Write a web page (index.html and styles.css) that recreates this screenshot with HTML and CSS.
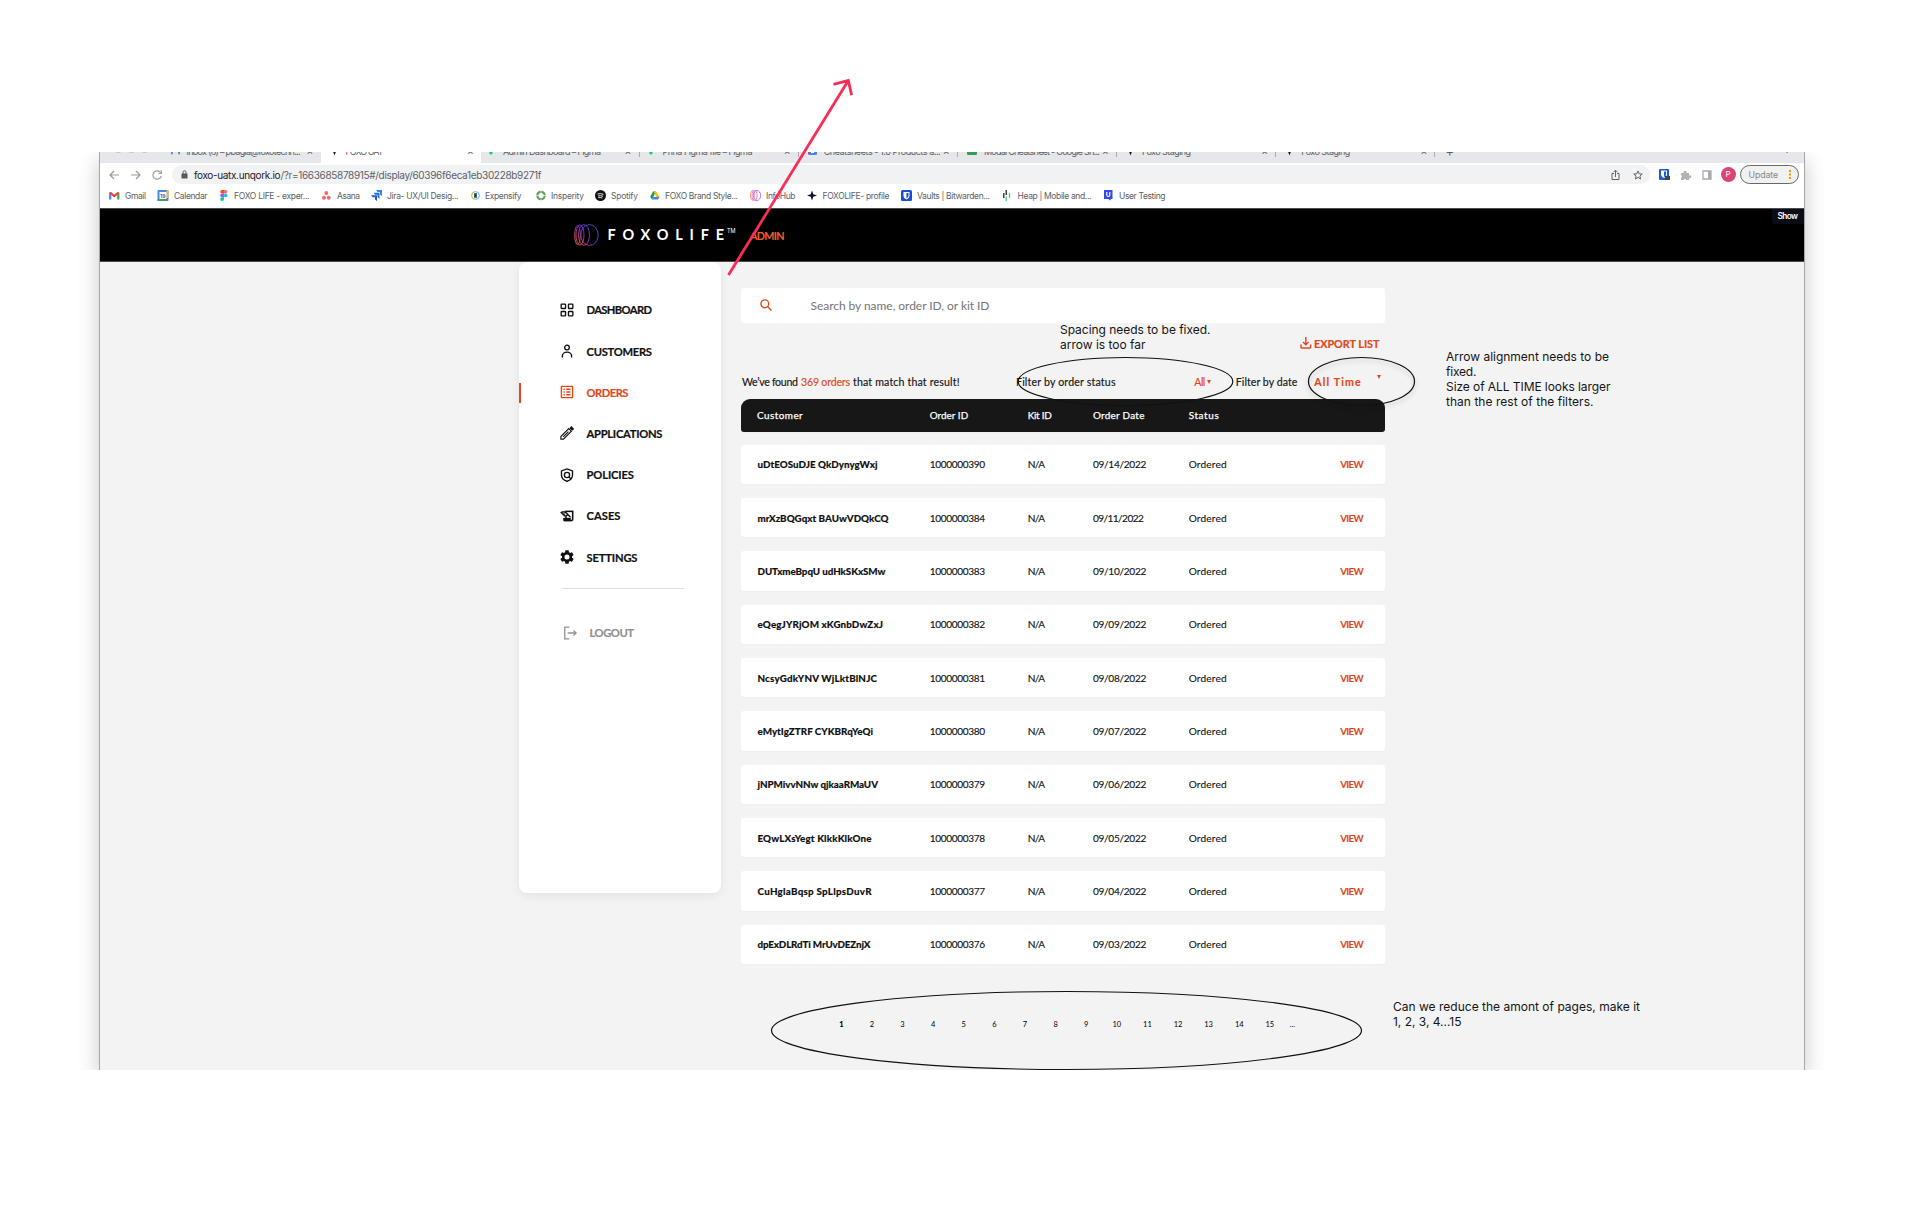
FILE: index.html
```html
<!DOCTYPE html>
<html lang="en">
<head>
<meta charset="utf-8">
<title>FOXO UAT</title>
<link rel="stylesheet" href="styles.css">
</head>
<body>
<main class="board">
<section class="window">
  <div class="tabs">
    <div class="tab lead"><i class="light"></i><i class="light"></i><i class="light"></i>
      <svg class="fav mail" width="9" height="9" viewBox="0 0 11 9"><path d="M1 9V1" stroke="#4285f4" stroke-width="2.4"/><path d="M10 9V1" stroke="#34a853" stroke-width="2.4"/><path d="M1 1l4.500 4L10 1" fill="none" stroke="#ea4335" stroke-width="2.400"/></svg>
      <span class="title" data-w="114">Inbox (6) – pbagla@foxotechn...</span><b>×</b></div>
    <div class="tab active"><svg class="fav" width="9" height="10" viewBox="0 0 10 10"><path d="M5 0l1.300 3.700L10 5 6.300 6.300 5 10 3.700 6.300 0 5l3.700-1.300z" fill="#0b1533"/></svg><span class="title" data-w="38">FOXO UAT</span><b>×</b></div>
    <div class="tab t3"><svg class="fav" width="7" height="9" viewBox="0 0 8 12"><path d="M0 8a2 2 0 1 0 4 2V6H2a2 2 0 0 0-2 2" fill="#0acf83"/><circle cx="6" cy="6" r="2" fill="#1abcfe"/><path d="M2 4h2v4H2a2 2 0 0 1 0-4" fill="#a259ff"/></svg><span class="title" data-w="98">Admin Dashboard – Figma</span><b>×</b></div>
    <div class="tab"><svg class="fav" width="7" height="9" viewBox="0 0 8 12"><path d="M0 8a2 2 0 1 0 4 2V6H2a2 2 0 0 0-2 2" fill="#0acf83"/><circle cx="6" cy="6" r="2" fill="#1abcfe"/><path d="M2 4h2v4H2a2 2 0 0 1 0-4" fill="#a259ff"/></svg><span class="title" data-w="90">Prina Figma file – Figma</span><b>×</b></div>
    <div class="tab"><svg class="fav" width="9" height="9" viewBox="0 0 9 9"><rect width="9" height="9" rx="1.500" fill="#4285f4"/><path d="M0 3h3v3L0 8z" fill="#ea4335"/><path d="M3 5h3v2H3z" fill="#fff"/></svg><span class="title" data-w="117">Cheatsheets - 1.0 Products a...</span><b>×</b></div>
    <div class="tab"><svg class="fav" width="10" height="9" viewBox="0 0 10 9"><rect width="10" height="9" rx="1" fill="#2f9e53"/><path d="M5 0v6M2 5h6" stroke="#fff"/></svg><span class="title" data-w="116">Modal Cheatsheet - Google Sh...</span><b>×</b></div>
    <div class="tab"><svg class="fav" width="9" height="10" viewBox="0 0 10 10"><path d="M5 0l1.300 3.700L10 5 6.300 6.300 5 10 3.700 6.300 0 5l3.700-1.300z" fill="#0b1533"/></svg><span class="title" data-w="49">Foxo Staging</span><b>×</b></div>
    <div class="tab"><svg class="fav" width="9" height="10" viewBox="0 0 10 10"><path d="M5 0l1.300 3.700L10 5 6.300 6.300 5 10 3.700 6.300 0 5l3.700-1.300z" fill="#0b1533"/></svg><span class="title" data-w="49">Foxo Staging</span><b>×</b></div>
    <span class="plus">+</span><span class="caret">⌄</span>
  </div>

  <div class="toolbar">
    <svg class="nav" width="54" height="12" viewBox="0 0 54 12" fill="none" stroke="#9b9b9d" stroke-width="1.200"><path d="M11 6H2M6 2L2 6l4 4"/><path d="M23 6h9M28 2l4 4-4 4"/><path d="M52.500 3.500A4.200 4.200 0 1 0 53.200 7M53.300 1.500v3h-3"/></svg>
    <div class="address">
      <svg width="7" height="9" viewBox="0 0 7 9"><rect y="3.500" x=".5" width="6" height="5" rx=".6" fill="#55585c"/><path d="M2 4V2.300a1.500 1.500 0 0 1 3 0V4" fill="none" stroke="#55585c"/></svg>
      <span class="host" data-w="86.500">foxo-uatx.unqork.io</span><span class="path" data-w="261">/?r=1663685878915#/display/60396f6eca1eb30228b9271f</span>
      <svg class="share" width="9" height="12" viewBox="0 0 9 12" fill="none" stroke="#5f6368"><path d="M3 4.500H1v6h7v-6H6M4.500 8V1.300M2.500 3.200l2-2 2 2"/></svg>
      <svg width="10" height="10" viewBox="0 0 10 10" fill="none" stroke="#5f6368"><path d="M5 1l1.200 2.800 3 .2-2.300 2 .7 3L5 7.400 2.400 9l.7-3L.8 4l3-.2z"/></svg>
    </div>
    <svg class="ext" width="53" height="12" viewBox="0 0 53 12"><rect width="10" height="11" rx="1" fill="#175ddc"/><path d="M2 1.500h6v4C8 7.500 6 8.700 5 9 4 8.700 2 7.500 2 5.500z" fill="#fff"/><path d="M5 2.500h2v3C7 7 5.500 7.700 5 8z" fill="#175ddc"/><rect x="6" y="7" width="5" height="4" fill="#444"/><path d="M22 4h2.500a1.600 1.600 0 1 1 3 0H30v2.500a1.500 1.500 0 1 1 0 2.500v2h-2.700a1.500 1.500 0 0 0-2.800 0H22V8.500a1.300 1.300 0 0 0 0-2.500z" fill="#b1b3b6"/><path d="M44 2h8v8h-8z" fill="none" stroke="#a9abae" stroke-width="1.300"/><path d="M49 2h3v8h-3z" fill="#a9abae"/></svg>
    <span class="avatar">P</span>
    <span class="update"><span data-w="29.500">Update</span><svg width="2" height="9" viewBox="0 0 2 9" fill="#f29900"><path d="M0 0h2v2H0zM0 3.500h2v2H0zM0 7h2v2H0z"/></svg></span>
  </div>

  <div class="bookmarks">
    <a><svg width="11" viewBox="0 0 11 11"><path d="M1.200 9.500V2.500" stroke="#4285f4" stroke-width="2.200"/><path d="M9.300 9.500V2.500" stroke="#34a853" stroke-width="2.200"/><path d="M1 2.500l4.250 3.500L9.500 2.500" fill="none" stroke="#ea4335" stroke-width="2.200"/></svg><span data-w="21">Gmail</span></a>
    <a><svg width="12" viewBox="0 0 11 11"><rect width="11" height="11" rx="1" fill="#4285f4"/><path d="M9 0h2v8H9z" fill="#fbbc04"/><path d="M0 9h8v2H0z" fill="#34a853"/><path d="M8 11V8h3z" fill="#ea4335"/><path d="M2 2h7v7H2z" fill="#fff"/><text x="2.600" y="7.700" font-size="5" font-weight="700" fill="#1a63d8">19</text></svg><span data-w="33.500">Calendar</span></a>
    <a><svg width="9" viewBox="0 0 9 11"><path d="M2 0h2v3.600H2A1.800 1.800 0 0 1 2 0" fill="#f24e1e"/><path d="M4 0h1.500a1.800 1.800 0 0 1 0 3.600H4z" fill="#ff7262"/><path d="M2 3.600h2v3.600H2a1.800 1.800 0 0 1 0-3.600" fill="#a259ff"/><circle cx="5.700" cy="5.400" r="1.800" fill="#1abcfe"/><path d="M2 7.200h2V9a1.900 1.900 0 1 1-2-1.800" fill="#0acf83"/></svg><span data-w="75.500">FOXO LIFE - exper...</span></a>
    <a><svg width="10" viewBox="0 0 10 11" fill="#f06a6a"><circle cx="4.300" cy="3" r="2"/><circle cx="2" cy="7.700" r="2"/><circle cx="6.700" cy="7.700" r="2"/></svg><span data-w="23">Asana</span></a>
    <a><svg width="11" viewBox="0 0 11 11"><path d="M5 0h6v6L9 4.500V2H6.500z" fill="#2684ff"/><path d="M2.500 2.700h6v6l-2-1.500V4.700H4z" fill="#2371e8"/><path d="M0 5.300h6v5.700l-2-1.500V7.300H1.500z" fill="#1b5fd0"/></svg><span data-w="71.500">Jira- UX/UI Desig...</span></a>
    <a><svg width="9" viewBox="0 0 9 11"><circle cx="4.500" cy="5.500" r="3.900" fill="#fff" stroke="#5bb0f0"/><path d="M4.500 1.600a3.900 3.900 0 0 0 0 7.800" fill="none" stroke="#f2d632"/><path d="M6 4H3.800v3.200H6M3.800 5.600h2" stroke="#17305c" stroke-width="1.300" fill="none"/></svg><span data-w="36.500">Expensify</span></a>
    <a><svg width="10.500" viewBox="0 0 10.500 11"><circle cx="5" cy="5.500" r="3.700" fill="none" stroke="#5da25b" stroke-width="2.200"/><path d="M5 0v4M5 7v4M0 5.500h3.500M6.500 5.500H10" stroke="#fff" stroke-width=".6"/></svg><span data-w="33">Insperity</span></a>
    <a><svg width="11" viewBox="0 0 11 11"><circle cx="5.500" cy="5.500" r="5.500" fill="#111"/><path d="M2.500 4q3-1 6 .4M3 6q2.500-.8 5 .3M3.300 7.700q2-.5 4 .3" fill="none" stroke="#fff" stroke-width=".9"/></svg><span data-w="27">Spotify</span></a>
    <a><svg width="10" viewBox="0 0 10 11"><path d="M3 1.500h3L2 9.500.200 7z" fill="#0f9d58"/><path d="M3.500 1.500h2.700L9.600 7H6.500z" fill="#fbbc04"/><path d="M3.200 7h6.400L8 9.500H1.800z" fill="#4285f4"/></svg><span data-w="73">FOXO Brand Style...</span></a>
    <a><svg width="11.500" viewBox="0 0 11.500 11" fill="none" stroke-width=".8"><ellipse cx="2.500" cy="5.500" rx="2" ry="5" stroke="#f2855e"/><ellipse cx="4.500" cy="5.500" rx="2.500" ry="5" stroke="#d35bd0"/><ellipse cx="7" cy="5.500" rx="3.700" ry="5" stroke="#8b5cf0"/></svg><span data-w="29.500">InfoHub</span></a>
    <a><svg width="10.500" viewBox="0 0 10.500 11"><path d="M5 .5l1.300 3.700L10 5.500 6.300 6.800 5 10.500 3.700 6.800 0 5.500l3.700-1.300z" fill="#0b1533"/></svg><span data-w="67">FOXOLIFE- profile</span></a>
    <a><svg width="11" viewBox="0 0 11 11"><rect width="11" height="11" rx="1.500" fill="#1a4fd0"/><path d="M2.500 2h6v4q0 2-3 3.500-3-1.500-3-3.500z" fill="#fff"/><path d="M5.500 3h2v3q0 1.200-2 2.300z" fill="#1a4fd0"/></svg><span data-w="73">Vaults | Bitwarden...</span></a>
    <a><svg width="9.500" viewBox="0 0 9.500 11" fill="none" stroke-width="1.300"><path d="M.8 3v5M3.200 0v5" stroke="#222"/><path d="M3.200 6.500V11M6.500 3v5" stroke="#31d47c"/></svg><span data-w="74">Heap | Mobile and...</span></a>
    <a><svg width="10" viewBox="0 0 10 11"><path d="M0 0h8.500v9H7l-1 1.500L4.500 9H0z" fill="#2f4bea"/><path d="M2.800 2v3a1.500 1.500 0 0 0 3 0V2" fill="none" stroke="#fff" stroke-width="1.200"/></svg><span data-w="46.500">User Testing</span></a>
  </div>

  <header class="masthead">
    <svg class="logo" width="25" height="22" viewBox="0 0 25 22" fill="none"><defs><linearGradient id="g" gradientUnits="userSpaceOnUse" x1="1" y1="20" x2="22" y2="3"><stop offset="0" stop-color="#f36b2c"/><stop offset=".5" stop-color="#8f2fd0"/><stop offset="1" stop-color="#2a62d8"/></linearGradient></defs><g stroke="url(#g)" stroke-width=".9"><ellipse cx="3.500" cy="11" rx="2.800" ry="9.500"/><ellipse cx="6" cy="11" rx="4" ry="10"/><ellipse cx="10" cy="11" rx="5.500" ry="10.300"/><ellipse cx="15.500" cy="11" rx="8.700" ry="10.400"/></g></svg>
    <span class="brand" data-w="116.500">FOXOLIFE</span><sup class="tm">TM</sup><span class="role" data-w="34.500">ADMIN</span>
    <span class="show"><span data-w="20.500">Show</span></span>
  </header>

  <div class="app">
    <nav class="side">
      <a><svg viewBox="0 0 24 24" fill="none" stroke="#111" stroke-width="2.300"><rect x="2" y="2" width="7.500" height="7.500" rx="1"/><rect x="14.500" y="2" width="7.500" height="7.500" rx="1"/><rect x="2" y="14.500" width="7.500" height="7.500" rx="1"/><rect x="14.500" y="14.500" width="7.500" height="7.500" rx="1"/></svg><span data-w="65.500">DASHBOARD</span></a>
      <a><svg viewBox="0 0 24 24" fill="none" stroke="#111" stroke-width="2.300"><circle cx="12" cy="6" r="4"/><path d="M4 23v-2a8 7 0 0 1 16 0v2"/></svg><span data-w="65.500">CUSTOMERS</span></a>
      <a class="on"><svg viewBox="2 2 20 20" fill="currentColor"><path d="M19 5v14H5V5h14m1.100-2H3.900c-.5 0-.9.4-.9.9v16.200c0 .4.4.9.9.9h16.200c.4 0 .9-.5.9-.9V3.900c0-.5-.5-.9-.9-.9zM11 7h6v2h-6V7zm0 4h6v2h-6v-2zm0 4h6v2h-6zM7 7h2v2H7zm0 4h2v2H7zm0 4h2v2H7z"/></svg><span data-w="42">ORDERS</span></a>
      <a><svg viewBox="0 0 24 24" fill="none" stroke="#111" stroke-width="1.900"><path d="M1.500 22.500v-4.500L15 4.500l4.500 4.500L6 22.500zM5.500 18.500L14.500 9.500"/><path d="M17.500 3.500l2-2 3.500 3.500-2 2z" fill="#111"/></svg><span data-w="76">APPLICATIONS</span></a>
      <a><svg viewBox="0 0 24 24" fill="none" stroke="#111" stroke-width="2.300"><path d="M12 1.500l9.500 3.500v7c0 5-4 9-9.500 10.700C6.500 21 2.500 17 2.500 12V5z"/><circle cx="12" cy="12" r="4.500"/><path d="M15 15l4 4"/></svg><span data-w="47.500">POLICIES</span></a>
      <a><svg viewBox="1 2 21 20" fill="#111" stroke="#111" stroke-width=".4"><path d="M9 4v1.380c-.83-.33-1.720-.5-2.610-.5-1.790 0-3.580.68-4.950 2.050l3.330 3.330h1.110v1.110c.86.86 1.980 1.310 3.110 1.360V15H6v3c0 1.100.9 2 2 2h10c1.660 0 3-1.340 3-3V4H9zm-1.110 6.410V8.260H5.610L4.570 7.220a5.070 5.070 0 0 1 1.820-.34c1.340 0 2.590.52 3.540 1.460l1.410 1.410-.2.200a2.700 2.700 0 0 1-1.920.8c-.47 0-.93-.12-1.330-.34zM19 17c0 .55-.45 1-1 1s-1-.45-1-1v-2h-6v-2.590c.57-.23 1.100-.57 1.560-1.030l.2-.2L15.590 14H17v-1.410l-6-5.970V6h8v11z"/></svg><span data-w="34">CASES</span></a>
      <a><svg viewBox="2 2 20 20" fill="#111"><path d="M19.140 12.940c.04-.3.060-.61.060-.94 0-.32-.02-.64-.07-.94l2.030-1.580c.18-.14.230-.41.120-.61l-1.920-3.320c-.12-.22-.37-.29-.59-.22l-2.390.96c-.5-.38-1.030-.7-1.620-.94l-.36-2.540c-.04-.24-.24-.41-.48-.41h-3.840c-.24 0-.43.17-.47.41l-.36 2.540c-.59.24-1.130.57-1.620.94l-2.390-.96c-.22-.08-.47 0-.59.22L2.740 8.870c-.12.210-.08.470.12.610l2.030 1.580c-.05.3-.09.63-.09.94s.02.64.07.94l-2.030 1.580c-.18.14-.23.41-.12.610l1.920 3.320c.12.220.37.290.59.220l2.390-.96c.5.380 1.030.7 1.620.94l.36 2.540c.05.240.240.410.480.410h3.840c.24 0 .44-.17.470-.41l.36-2.540c.59-.24 1.130-.56 1.620-.94l2.390.96c.220.080.470 0 .59-.22l1.920-3.320c.12-.22.07-.47-.12-.61zM12 15.600a3.600 3.600 0 1 1 0-7.200 3.600 3.600 0 0 1 0 7.200z"/></svg><span data-w="51">SETTINGS</span></a>
      <hr>
      <a class="logout"><svg viewBox="0 0 24 24" fill="none" stroke="currentColor" stroke-width="2.200"><path d="M11 2H3v20h8M8 12h14M18 7.500l4.500 4.500-4.500 4.500"/></svg><span data-w="44.500">LOGOUT</span></a>
    </nav>

    <section class="content">
      <div class="search"><svg width="12" height="12" viewBox="0 0 12 12" fill="none" stroke="#e2481d" stroke-width="1.400"><circle cx="4.800" cy="4.800" r="3.900"/><path d="M7.700 7.700l3.700 3.700"/></svg><span data-w="179">Search by name, order ID, or kit ID</span></div>
      <div class="export"><svg width="12" height="12" viewBox="0 0 12 12" fill="none" stroke="#e2481d" stroke-width="1.400"><path d="M1 7.500v2.700q0 .8.800.8h8q.8 0 .8-.8V7.500M5.800 0v7.500M3 5l2.800 2.800L8.600 5"/></svg><span data-w="65.500">EXPORT LIST</span></div>
      <div class="filters">
        <span class="found"><span data-w="56">We’ve found</span><em data-w="49">369 orders</em><span data-w="106.500">that match that result!</span></span>
        <span class="by-status" data-w="99.500">Filter by order status</span>
        <span class="all"><span data-w="11">All</span><i></i></span>
        <span class="by-date" data-w="61.500">Filter by date</span>
        <span class="time"><b data-w="46.500">All Time</b><i></i></span>
      </div>
      <div class="row head"><span data-w="45.700">Customer</span><span data-w="38.500">Order ID</span><span data-w="24">Kit ID</span><span data-w="51.500">Order Date</span><span data-w="30">Status</span></div>
      <div class="rows"></div>
      <div class="pages"></div>
    </section>
  </div>
</section>

<div class="notes">
  <svg class="ink" width="1911" height="1214" viewBox="0 0 1911 1214" fill="none" stroke="#111" stroke-width="1.200">
    <ellipse cx="1125.500" cy="381.500" rx="107.300" ry="24"/>
    <ellipse class="lifted" cx="1361.500" cy="381.500" rx="53" ry="24"/>
    <ellipse cx="1066.500" cy="1030.500" rx="295" ry="39"/>
    <path d="M728.500 275L848.300 80.500M833.500 84.300l14.800-3.800 3.300 14.600" stroke="#fb2c56" stroke-width="2.800"/>
  </svg>
  <p class="note n1"><span data-w="150.500">Spacing needs to be fixed.</span><br><span data-w="85.500">arrow is too far</span></p>
  <p class="note n2"><span data-w="163">Arrow alignment needs to be</span><br><span data-w="30.500">fixed.</span><br><span data-w="164.500">Size of ALL TIME looks larger</span><br><span data-w="147.500">than the rest of the filters.</span></p>
  <p class="note n3"><span data-w="247">Can we reduce the amont of pages, make it</span><br><span data-w="68.500">1, 2, 3, 4...15</span></p>
</div>
</main>
<script src="app.js"></script>
</body>
</html>
```
FILE: styles.css
```css
* { box-sizing: border-box; }
body { margin: 0; background: #fff; font-family: "Inter", "Liberation Sans", sans-serif; }
i { font-style: normal; }
svg { display: block; flex: none; }
span, em, b { white-space: nowrap; }
.board { position: relative; width: 1911px; height: 1214px; padding: 152px 0 0 98.5px; overflow: hidden; }
.window { width: 1706px; height: 918px; background: #f3f3f3; border: solid #a6a6a6; border-width: 0 1px; box-shadow: 0 8px 20px rgba(0, 0, 0, .22); clip-path: inset(0 -22px 0 -22px); overflow: visible; display: flex; flex-direction: column; }

.tabs { display: flex; height: 11px; background: #e6e7ea; overflow: hidden; font-size: 9px; line-height: 12px; color: #5a5e63; flex: none; }
.tab { position: relative; display: flex; align-items: flex-start; width: 159.200px; flex: none; padding-left: 9px; border-right: 1px solid #a9acb1; height: 5px; }
.tab .title { margin-top: -6.500px; }
.tab b { font-weight: 400; font-size: 11px; margin: -7px 7px 0 auto; }
.tab .fav { margin: -6px 7px 0 0; }
.tab.lead { width: 221px; padding-left: 15px; border: 0; }
.light { width: 7px; height: 7px; border-radius: 50%; background: #c3c4c6; margin: -6px 6px 0 0; }
.tab .mail { margin-left: 17px; }
.tab.active { width: 160.500px; background: #fff; border: 0; height: 11px; }
.tab.t3 { width: 158.500px; padding-left: 8px; }
.plus { margin: -7.500px 0 0 10px; font-size: 13px; }
.caret { margin: -9px 12px 0 auto; font-size: 12px; }

.toolbar { display: flex; align-items: center; height: 23px; background: #fff; flex: none; padding: 0 5px 0 8.500px; }
.nav { margin-right: 10px; }
.address { display: flex; align-items: center; width: 1478px; height: 19px; border-radius: 10px; background: #f1f2f4; padding: 0 7px 0 9px; font-size: 10px; color: #5c6065; }
.host { margin-left: 6px; color: #1e2023; }
.share { margin: 0 13px 0 auto; }
.ext { margin: 0 9px; }
.avatar { width: 15px; height: 15px; border-radius: 50%; background: #db4473; color: #fff; font-size: 8px; line-height: 15px; text-align: center; margin-right: 4px; }
.update { display: flex; align-items: center; justify-content: space-between; width: 59px; height: 19px; border: 1.500px solid #66686a; border-radius: 10px; background: #f1f1f1; color: #85888c; font-size: 8.800px; padding: 0 7px 0 8px; }

.bookmarks { display: grid; grid-template-columns: 48px 63px 102px 49px 100px 64.500px 59.500px 55px 99.500px 57.500px 94px 102px 101px 66px; align-items: center; height: 22px; background: #fff; padding: 0 0 3px 9.500px; border-bottom: 0; font-size: 8.500px; color: #5d6064; flex: none; }
.bookmarks a { display: flex; align-items: center; gap: 5px; }
.bookmarks svg { height: 11px; }

.masthead { display: flex; align-items: center; height: 54px; background: #000; border: solid #4a4a4a; border-width: 1px 0; padding: 0 0 1px 474px; position: relative; color: #fff; flex: none; }
.brand { font: 700 14.500px "Lato", sans-serif; margin-left: 9px; }
.tm { font-size: 5.500px; margin: -7px 0 0 3px; width: 23px; line-height: 6px; }
.role { color: #f0602c; font: 700 10.800px "Lato", sans-serif; margin-top: 1.500px; }
.show { position: absolute; top: 0; right: 0; width: 32px; height: 15px; background: #0a0c18; border-radius: 0 0 0 3px; font-size: 8.300px; font-weight: 600; line-height: 15px; padding-left: 6px; }

.app { display: flex; font-family: "Lato", "Liberation Sans", sans-serif; flex: 1; padding-left: 419.500px; }
.side { width: 202px; height: 631px; background: #fff; border-radius: 8px; box-shadow: 0 3px 10px rgba(0, 0, 0, .07); padding-top: 27.300px; display: flex; flex-direction: column; flex: none; }
.side a { display: flex; align-items: center; height: 41.200px; padding-left: 41px; gap: 12.500px; font-size: 11.200px; font-weight: 700; color: #111; position: relative; flex: none; -webkit-text-stroke: .2px; }
.side svg { width: 14px; height: 14px; }
.side .on { color: #e2481d; }
.side .on::before { content: ""; position: absolute; left: 0; top: 11.500px; width: 2px; height: 19.500px; background: #e2481d; }
.side hr { width: 121.500px; height: 1px; border: 0; background: #dedede; margin: 10.200px 0 23.500px 43px; flex: none; }
.side .logout { color: #919191; padding-left: 44px; gap: 12.500px; }

.content { width: 644px; margin-left: 20px; padding-top: 26px; }
.search { display: flex; align-items: center; height: 34.500px; background: #fff; border-radius: 3px; padding-left: 19px; gap: 38.500px; font-size: 12px; color: #757575; }
.export { display: flex; align-items: center; height: 16px; margin-top: 12.500px; padding-left: 558.500px; gap: 2.500px; font-size: 10.900px; font-weight: 700; color: #e2481d; -webkit-text-stroke: .2px; }
.filters { display: flex; align-items: center; height: 20px; margin-top: 20.500px; padding-left: 1px; font-size: 10.600px; color: #151515; -webkit-text-stroke: .15px; }
.found { display: flex; gap: 3px; width: 274px; }
.found em { font-style: normal; color: #e2481d; }
.by-status { width: 178.500px; }
.all { display: flex; align-items: center; gap: 2px; width: 41.500px; color: #e2481d; }
.all i, .time i { border: solid transparent; border-width: 4px 2.200px 0; border-top-color: #e2481d; }
.by-date { width: 78.500px; }
.time { display: flex; align-items: center; color: #e2481d; }
.time i { margin: -10px 0 0 16px; }
.row { display: grid; grid-template-columns: 172.700px 98px 65.200px 95.800px 151.500px auto; align-items: center; height: 39.300px; padding: 0 0 0 16px; background: #fff; border-radius: 3px; font-size: 10.100px; color: #111; box-shadow: 0 1px 1px rgba(0, 0, 0, .02); -webkit-text-stroke: .12px; }
.row.head { height: 33.500px; margin-top: 7.200px; background: #171717; color: #fff; border-radius: 9px 9px 3px 3px; -webkit-text-stroke: .25px; font-size: 9.900px; }
.rows { display: grid; gap: 14.040px; margin-top: 12.600px; }
.row .name { font-weight: 900; font-size: 9.800px; margin-left: .5px; }
.row .view { color: #e2481d; font-weight: 700; font-size: 9.700px; }
.pages { display: grid; grid-template-columns: repeat(15, 30.620px) 20px; margin: 52.700px 0 0 85px; font-size: 7.500px; line-height: 16px; text-align: center; }
.pages b { font-weight: 900; }
.pages .more { text-align: left; padding-left: 4.500px; }

.notes { position: absolute; inset: 0; pointer-events: none; }
.ink { position: absolute; inset: 0; }
.lifted { filter: drop-shadow(0 3px 2px rgba(0, 0, 0, .2)); }
.note { position: absolute; margin: 0; font-size: 12px; line-height: 15px; color: #151515; }
.n1 { left: 1060px; top: 322px; }
.n2 { left: 1446px; top: 349px; }
.n3 { left: 1393px; top: 999px; }
```
FILE: app.js
```js
const orders = [
  ["uDtEOSuDJE QkDynygWxj", 120, "390", "14"],
  ["mrXzBQGqxt BAUwVDQkCQ", 131, "384", "11"],
  ["DUTxmeBpqU udHkSKxSMw", 128, "383", "10"],
  ["eQegJYRjOM xKGnbDwZxJ", 125.5, "382", "09"],
  ["NcsyGdkYNV WjLktBlNJC", 119.5, "381", "08"],
  ["eMytIgZTRF CYKBRqYeQi", 115.5, "380", "07"],
  ["jNPMivvNNw qjkaaRMaUV", 120.5, "379", "06"],
  ["EQwLXsYegt KlkkKlkOne", 114, "378", "05"],
  ["CuHglaBqsp SpLlpsDuvR", 114, "377", "04"],
  ["dpExDLRdTi MrUvDEZnjX", 113, "376", "03"]
];
document.querySelector(".rows").innerHTML = orders.map(([name, w, id, day]) =>
  `<div class="row"><span class="name" data-w="${w}">${name}</span>` +
  `<span data-w="55.5">1000000${id}</span><span data-w="17.5">N/A</span>` +
  `<span data-w="${day === "11" ? 51 : 53.5}">09/${day}/2022</span>` +
  `<span data-w="38">Ordered</span><span class="view" data-w="23.5">VIEW</span></div>`).join("");

let pages = "<b>1</b>";
for (let n = 2; n <= 15; n++) pages += `<span>${n}</span>`;
document.querySelector(".pages").innerHTML = pages + '<span class="more">...</span>';

// Track each label out to its set measure (data-w, in px).
document.querySelectorAll("[data-w]").forEach(el => {
  const range = document.createRange();
  range.selectNodeContents(el);
  const natural = range.getBoundingClientRect().width;
  const gap = (parseFloat(el.dataset.w) - natural) / (el.textContent.length - 1);
  el.style.letterSpacing = gap.toFixed(3) + "px";
  el.style.marginRight = (-gap).toFixed(3) + "px";
});
```
